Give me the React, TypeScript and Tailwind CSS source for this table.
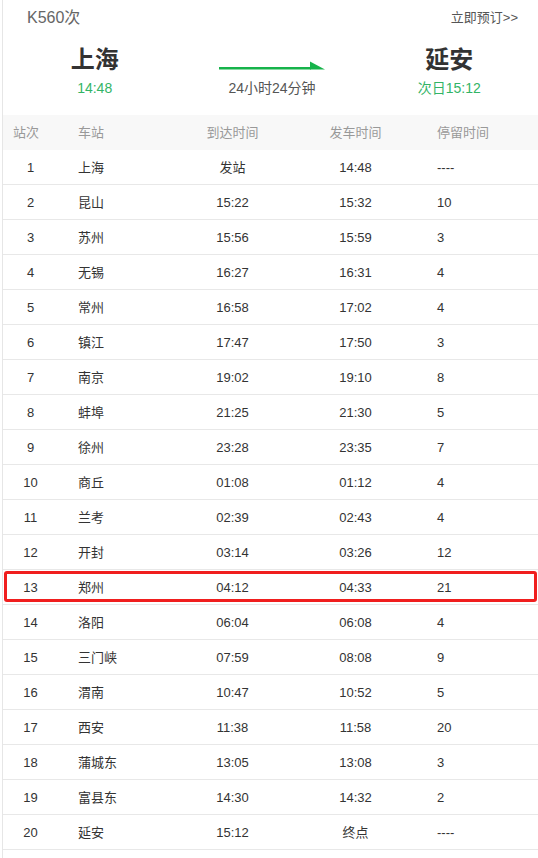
import React from "react";

type Row = [string, string, string, string, string];

const rows: Row[] = [
  ["1", "上海", "发站", "14:48", "----"],
  ["2", "昆山", "15:22", "15:32", "10"],
  ["3", "苏州", "15:56", "15:59", "3"],
  ["4", "无锡", "16:27", "16:31", "4"],
  ["5", "常州", "16:58", "17:02", "4"],
  ["6", "镇江", "17:47", "17:50", "3"],
  ["7", "南京", "19:02", "19:10", "8"],
  ["8", "蚌埠", "21:25", "21:30", "5"],
  ["9", "徐州", "23:28", "23:35", "7"],
  ["10", "商丘", "01:08", "01:12", "4"],
  ["11", "兰考", "02:39", "02:43", "4"],
  ["12", "开封", "03:14", "03:26", "12"],
  ["13", "郑州", "04:12", "04:33", "21"],
  ["14", "洛阳", "06:04", "06:08", "4"],
  ["15", "三门峡", "07:59", "08:08", "9"],
  ["16", "渭南", "10:47", "10:52", "5"],
  ["17", "西安", "11:38", "11:58", "20"],
  ["18", "蒲城东", "13:05", "13:08", "3"],
  ["19", "富县东", "14:30", "14:32", "2"],
  ["20", "延安", "15:12", "终点", "----"],
];

const font = { fontFamily: '"Liberation Sans", Arial, "Noto Sans CJK SC", sans-serif' };

export default function App() {
  return (
    <div className="w-[538px] h-[858px] bg-white pl-[2px]" style={font}>
      <div className="h-full border-l border-[#e6e6e6]">
        {/* title */}
        <div className="h-[35px] flex items-center justify-between pl-[24px] pr-[20px]">
          <span className="text-[16px] text-[#666]">K560次</span>
          <span className="text-[13px] text-[#555]">立即预订&gt;&gt;</span>
        </div>
        {/* stations */}
        <div className="flex pl-[3px] pt-[10px] h-[80px]">
          <div className="flex-1 flex flex-col items-center">
            <div className="text-[24px] leading-[30px] font-bold text-[#333]">上海</div>
            <div className="mt-[3px] text-[14px] leading-[20px] text-[#33b466]">14:48</div>
          </div>
          <div className="flex-1 flex flex-col items-center">
            <div className="h-[30px] flex items-end pb-[5px]">
              <svg width="106" height="9" viewBox="0 0 106 9">
                <rect x="0" y="6" width="92" height="2.5" fill="#16b34a" />
                <polygon points="91,0.5 106,8.5 91,8.5" fill="#16b34a" />
              </svg>
            </div>
            <div className="mt-[3px] text-[14px] leading-[20px] text-[#555]">24小时24分钟</div>
          </div>
          <div className="flex-1 flex flex-col items-center">
            <div className="text-[24px] leading-[30px] font-bold text-[#333]">延安</div>
            <div className="mt-[3px] text-[14px] leading-[20px] text-[#33b466]">次日15:12</div>
          </div>
        </div>
        {/* header */}
        <div className="flex h-[35px] items-center pt-[1px] bg-[#f8f8f8] text-[13px] text-[#999]">
          <div className="w-[55px] pl-[10px]">站次</div>
          <div className="w-[122px] pl-[20px]">车站</div>
          <div className="w-[105px] text-center">到达时间</div>
          <div className="w-[141px] text-center">发车时间</div>
          <div className="flex-1 pl-[11px]">停留时间</div>
        </div>
        {/* rows */}
        {rows.map((r) => (
          <div
            key={r[0]}
            className="relative flex h-[35px] items-center pt-[1px] border-b border-[#e8e8e8] text-[13px] text-[#333]"
          >
            <div className="w-[55px] text-center">{r[0]}</div>
            <div className="w-[122px] pl-[20px]">{r[1]}</div>
            <div className="w-[105px] text-center">{r[2]}</div>
            <div className="w-[141px] text-center">{r[3]}</div>
            <div className="flex-1 pl-[11px]">{r[4]}</div>
            {r[0] === "13" && (
              <div className="absolute left-[1px] right-[1px] top-[1px] h-[31px] border-[3px] border-[#f01e1e] rounded-[3px]" />
            )}
          </div>
        ))}
      </div>
    </div>
  );
}
